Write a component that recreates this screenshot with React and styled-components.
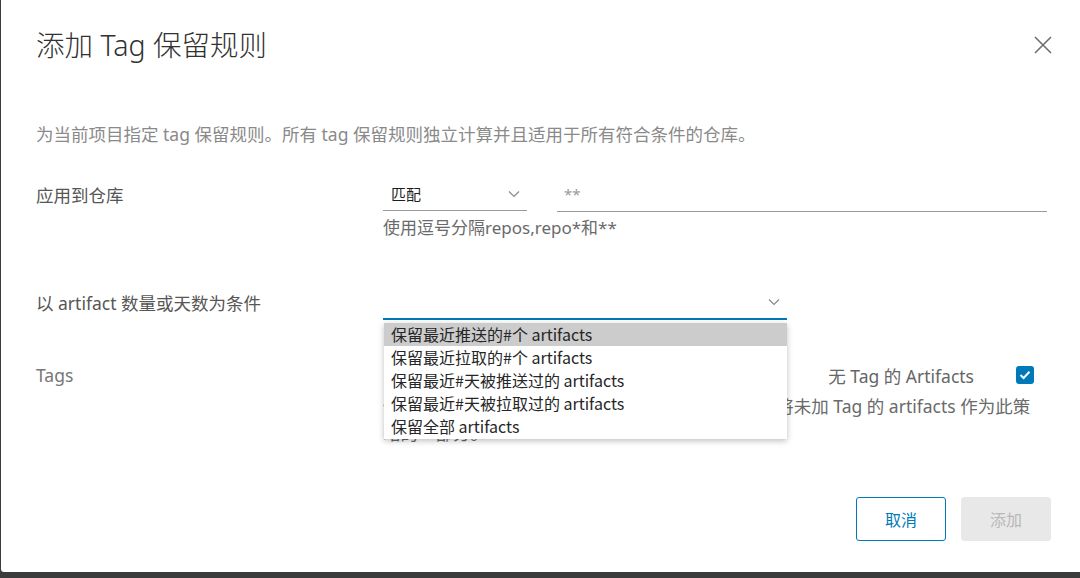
import React from "react";
import styled, { createGlobalStyle } from "styled-components";

const GlobalStyle = createGlobalStyle`
  html, body {
    margin: 0;
    padding: 0;
    background: #3b3b3b;
    overflow: hidden;
  }
  body {
    font-family: "Noto Sans", "Noto Sans CJK SC", sans-serif;
  }
`;

const options = [
  "保留最近推送的#个 artifacts",
  "保留最近拉取的#个 artifacts",
  "保留最近#天被推送过的 artifacts",
  "保留最近#天被拉取过的 artifacts",
  "保留全部 artifacts",
];

export default function App() {
  return (
    <>
      <GlobalStyle />
      <Modal>
        <Header>
          <Title>添加 Tag 保留规则</Title>
          <CloseButton aria-label="close">
            <svg width="18" height="18" viewBox="0 0 18 18">
              <path d="M1 1 L17 17 M17 1 L1 17" stroke="#6e6e6e" strokeWidth="1.6" fill="none" />
            </svg>
          </CloseButton>
        </Header>
        <Body>
          <Description>
            为当前项目指定 tag 保留规则。所有 tag 保留规则独立计算并且适用于所有符合条件的仓库。
          </Description>
          <Form>
            <Row>
              <Label>应用到仓库</Label>
              <Field>
                <Controls>
                  <Select $width={144}>
                    <span>匹配</span>
                    <Chevron />
                  </Select>
                  <Input $width={490}>**</Input>
                </Controls>
                <Help>使用逗号分隔repos,repo*和**</Help>
              </Field>
            </Row>
            <Row $top={49}>
              <Label>以 artifact 数量或天数为条件</Label>
              <Field>
                <Select $width={404} $active>
                  <span />
                  <Chevron />
                </Select>
                <Menu>
                  {options.map((o, i) => (
                    <MenuItem key={o} $selected={i === 0}>
                      {o}
                    </MenuItem>
                  ))}
                </Menu>
              </Field>
            </Row>
            <Row $top={39}>
              <Label $muted>Tags</Label>
              <Field>
                <Untagged>
                  无 Tag 的 Artifacts
                  <Checkbox>
                    <svg width="12" height="10" viewBox="0 0 12 10">
                      <path d="M1.5 5 L4.6 8 L10.5 1.8" stroke="#fff" strokeWidth="2" fill="none" />
                    </svg>
                  </Checkbox>
                </Untagged>
                <TagHelp>
                  使用逗号分隔tags,tag*和**。可以通过勾选复选框将未加 Tag 的 artifacts 作为此策
                  <br />
                  略的一部分。
                </TagHelp>
              </Field>
            </Row>
          </Form>
        </Body>
        <Footer>
          <Button $variant="outline">取消</Button>
          <Button $variant="disabled">添加</Button>
        </Footer>
      </Modal>
    </>
  );
}

function Chevron() {
  return (
    <ChevronIcon width="12" height="8" viewBox="0 0 12 8">
      <path d="M1 1.5 L6 6.5 L11 1.5" stroke="#8a8a8a" strokeWidth="1.2" fill="none" />
    </ChevronIcon>
  );
}

const Modal = styled.div`
  margin-left: 1px;
  width: 1079px;
  height: 572px;
  background: #fff;
  border-bottom-left-radius: 3px;
  box-sizing: border-box;
  padding: 0 29px 31px 35px;
  display: flex;
  flex-direction: column;
`;

const Header = styled.div`
  height: 90px;
  display: flex;
  align-items: center;
  justify-content: space-between;
`;

const Title = styled.h3`
  margin: 0;
  font-size: 28.5px;
  font-weight: 300;
  color: #313131;
  line-height: 1;
`;

const CloseButton = styled.button`
  border: none;
  background: none;
  padding: 0;
  margin-right: -1px;
  width: 18px;
  height: 18px;
  display: flex;
`;

const Body = styled.div`
  flex: 1;
`;

const Description = styled.p`
  margin: 32px 0 0;
  font-size: 17.5px;
  line-height: 24px;
  color: #8a8a8a;
`;

const Form = styled.div`
  margin-top: 33px;
  display: flex;
  flex-direction: column;
`;

const Row = styled.div`
  display: grid;
  grid-template-columns: 347px 1fr;
  margin-top: ${(p) => p.$top || 0}px;
`;

const Label = styled.div`
  font-size: 17.5px;
  line-height: 32px;
  color: ${(p) => (p.$muted ? "#777" : "#565656")};
`;

const Field = styled.div`
  position: relative;
  display: flex;
  flex-direction: column;
`;

const Controls = styled.div`
  display: flex;
  align-items: flex-start;
  gap: 30px;
`;

const Select = styled.div`
  width: ${(p) => p.$width}px;
  height: ${(p) => (p.$active ? 33 : 32)}px;
  box-sizing: border-box;
  border-bottom: ${(p) => (p.$active ? "2px solid #0079b8" : "1px solid #9a9a9a")};
  display: flex;
  align-items: center;
  justify-content: space-between;
  padding: 0 7px 2px 8px;
  font-size: 15px;
  color: #1e1e1e;
`;

const ChevronIcon = styled.svg`
  flex: none;
`;

const Input = styled.div`
  width: ${(p) => p.$width}px;
  height: 33px;
  box-sizing: border-box;
  border-bottom: 1px solid #9a9a9a;
  padding: 4px 7px 0;
  font-size: 15px;
  line-height: 22px;
  color: #9a9a9a;
`;

const Help = styled.div`
  margin-top: 6px;
  font-size: 17px;
  line-height: 20px;
  color: #6a6a6a;
`;

const Menu = styled.div`
  position: absolute;
  top: 36px;
  left: 1px;
  width: 403px;
  background: #fff;
  box-shadow: 0 2px 6px rgba(0, 0, 0, 0.25);
  z-index: 2;
  padding-bottom: 1px;
`;

const MenuItem = styled.div`
  height: 23px;
  line-height: 23px;
  padding-left: 7px;
  font-family: "Noto Sans CJK SC", "Noto Sans", sans-serif;
  font-size: 16px;
  color: #262626;
  background: ${(p) => (p.$selected ? "#cccccc" : "#fff")};
`;

const Untagged = styled.div`
  align-self: flex-end;
  margin-right: 17px;
  display: flex;
  align-items: center;
  gap: 42px;
  height: 32px;
  font-size: 17.5px;
  color: #666;
  white-space: nowrap;
`;

const Checkbox = styled.span`
  width: 18px;
  height: 18px;
  border-radius: 3px;
  background: #0079b8;
  display: flex;
  align-items: center;
  justify-content: center;
`;

const TagHelp = styled.div`
  margin-top: 2px;
  font-size: 17.5px;
  line-height: 27px;
  color: #6a6a6a;
  white-space: nowrap;
`;

const Footer = styled.div`
  display: flex;
  justify-content: flex-end;
  gap: 15px;
`;

const Button = styled.button`
  width: 90px;
  height: 44px;
  border-radius: 3px;
  font-family: "Noto Sans CJK SC", sans-serif;
  font-size: 16px;
  border: 1px solid ${(p) => (p.$variant === "outline" ? "#0079b8" : "#e8e8e8")};
  background: ${(p) => (p.$variant === "outline" ? "#fff" : "#e8e8e8")};
  color: ${(p) => (p.$variant === "outline" ? "#0079b8" : "#b8b8b8")};
`;
